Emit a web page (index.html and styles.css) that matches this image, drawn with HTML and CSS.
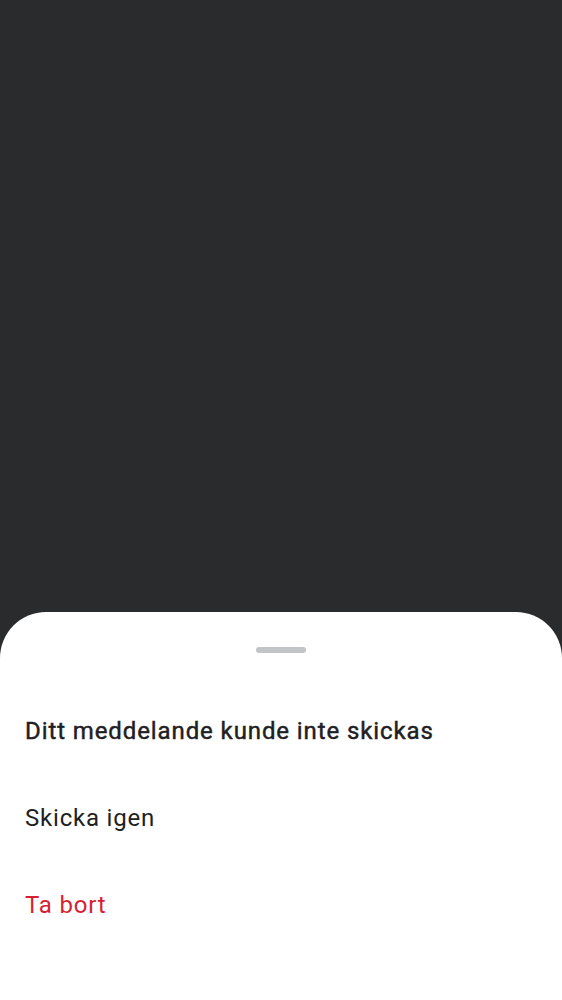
FILE: index.html
```html
<!DOCTYPE html>
<html lang="sv">
<head>
<meta charset="utf-8">
<link rel="stylesheet" href="styles.css">
</head>
<body>
<div class="screen">
  <div class="backdrop"></div>
  <div class="sheet">
    <div class="handle"></div>
    <div class="row title">Ditt meddelande kunde inte skickas</div>
    <div class="row action">Skicka igen</div>
    <div class="row action danger">Ta bort</div>
  </div>
</div>
</body>
</html>
```
FILE: styles.css
```css
html, body {
  margin: 0;
  padding: 0;
  height: 100%;
}
body {
  background: #2a2b2d;
  font-family: Roboto, "Noto Sans", sans-serif;
}
.screen {
  height: 1000px;
  display: flex;
  flex-direction: column;
}
.backdrop {
  flex: 1;
}
.sheet {
  background: #ffffff;
  border-radius: 46px 46px 0 0;
  padding: 35px 0 52px;
  display: flex;
  flex-direction: column;
}
.handle {
  width: 50px;
  height: 6px;
  border-radius: 3px;
  background: #c2c4c8;
  align-self: center;
  margin-bottom: 34px;
}
.row {
  height: 87px;
  display: flex;
  align-items: center;
  padding: 0 25px;
  font-size: 24px;
  letter-spacing: 0.8px;
  color: #1e1f22;
}
.title {
  font-weight: 400;
  letter-spacing: 0.9px;
  -webkit-text-stroke: 0.45px #1f2024;
  color: #1f2024;
}
.danger {
  color: #d71f33;
}
```
